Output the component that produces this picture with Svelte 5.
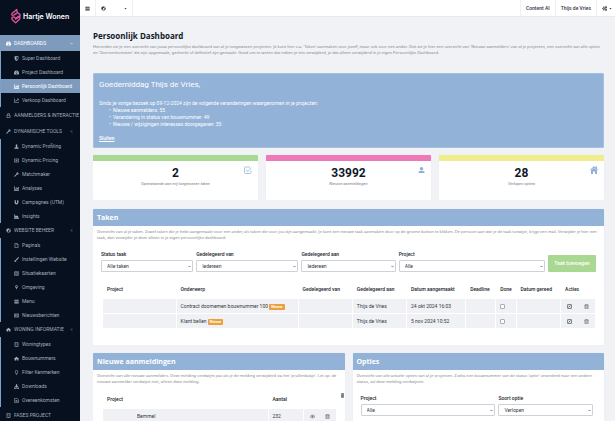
<script lang="ts">
  type Item = { icon: string; label: string; active?: boolean };
  type Section = { icon: string; label: string; open?: boolean; arrow?: string; items?: Item[] };

  const sections: Section[] = [
    {
      icon: 'gauge', label: 'Dashboards', open: true, arrow: 'down',
      items: [
        { icon: 'shield', label: 'Super Dashboard' },
        { icon: 'gauge', label: 'Project Dashboard' },
        { icon: 'bars', label: 'Persoonlijk Dashboard', active: true },
        { icon: 'line', label: 'Verkoop Dashboard' }
      ]
    },
    { icon: 'lock', label: 'Aanmelders & Interactie' },
    {
      icon: 'wrench', label: 'Dynamische tools', arrow: 'left',
      items: [
        { icon: 'person', label: 'Dynamic Profiling' },
        { icon: 'money', label: 'Dynamic Pricing' },
        { icon: 'wrench', label: 'Matchmaker' },
        { icon: 'bars', label: 'Analyses' },
        { icon: 'magnet', label: 'Campagnes (UTM)' },
        { icon: 'area', label: 'Insights' }
      ]
    },
    {
      icon: 'globe', label: 'Website beheer', arrow: 'left',
      items: [
        { icon: 'file', label: "Pagina's" },
        { icon: 'brush', label: 'Instellingen Website' },
        { icon: 'map', label: 'Situatiekaarten' },
        { icon: 'pin', label: 'Omgeving' },
        { icon: 'menu', label: 'Menu' },
        { icon: 'news', label: 'Nieuwsberichten' }
      ]
    },
    {
      icon: 'home', label: 'Woning informatie', arrow: 'left',
      items: [
        { icon: 'building', label: 'Woningtypes' },
        { icon: 'home', label: 'Bouwnummers' },
        { icon: 'bulb', label: 'Filter Kenmerken' },
        { icon: 'download', label: 'Downloads' },
        { icon: 'doc', label: 'Overeenkomsten' }
      ]
    },
    { icon: 'building', label: 'Fases project' }
  ];

  const stats = [
    { value: '2', label: 'Openstaande aan mij toegewezen taken', color: 'green', icon: 'check' },
    { value: '33992', label: 'Nieuwe aanmeldingen', color: 'pink', icon: 'user' },
    { value: '28', label: 'Verlopen opties', color: 'yellow', icon: 'house' }
  ];

  const filters = [
    { id: 'status', label: 'Status taak', value: 'Alle taken' },
    { id: 'van', label: 'Gedelegeerd van', value: 'Iedereen' },
    { id: 'aan', label: 'Gedelegeerd aan', value: 'Iedereen' },
    { id: 'project', label: 'Project', value: 'Alle' }
  ];

  const tasks = [
    { subject: 'Contract doornemen bouwnummer 100', to: 'Thijs de Vries', date: '24 okt 2024 16:03' },
    { subject: 'Klant bellen', to: 'Thijs de Vries', date: '5 nov 2024 10:52' }
  ];
</script>

{#snippet icon(name: string)}
  <svg class="icon" viewBox="0 0 16 16" aria-hidden="true">
    {#if name === 'gauge'}
      <path fill="currentColor" fill-rule="evenodd" d="M8 2a8 8 0 0 0-7 12h14A8 8 0 0 0 8 2zM7 4h2v2H7zM3 7h2v2H3zm8 0h2v2h-2zM7 12l2-5 1 5a1.500 1.500 0 0 1-3 0z" />
    {:else if name === 'shield'}
      <path fill="currentColor" fill-rule="evenodd" d="M2 1h12v7c0 4-3 6-6 8-3-2-6-4-6-8zM8 3v10c3-2 4-3 4-5V3z" />
    {:else if name === 'bars'}
      <path fill="currentColor" d="M0 1h2v12h14v2H0zM3 8h2v4H3zM6 4h2v8H6zM9 6h2v6H9zM12 3h3v9h-3z" />
    {:else if name === 'line'}
      <path fill="none" stroke="currentColor" stroke-width="2" d="M1 1v13h15M3 11l4-4 2 2 5-6M10 3h4v4" />
    {:else if name === 'area'}
      <path fill="currentColor" d="M0 1h2v12h14v2H0zM3 12V8l3-4 4 3 2-2 3 7z" />
    {:else if name === 'lock'}
      <path fill="none" stroke="currentColor" stroke-width="2" d="M3 7h10v8H3zM5 7V4a3 3 0 0 1 6 0v3" />
    {:else if name === 'wrench'}
      <path fill="currentColor" d="M1 13l7-7a4 4 0 0 1 5-5l-2 3 1 1 3-2a4 4 0 0 1-5 5l-7 7a1.500 1.500 0 0 1-2-2z" />
    {:else if name === 'person'}
      <path fill="currentColor" d="M8 1a3 3 0 0 1 2 5l1 5 4 1v3H1v-3l4-1 1-5a3 3 0 0 1 2-5z" />
    {:else if name === 'money'}
      <path fill="none" stroke="currentColor" stroke-width="2" d="M1 3h14v10H1zM4 6l2 2-2 2M12 6l-2 2 2 2M8 5v6" />
    {:else if name === 'magnet'}
      <path fill="none" stroke="currentColor" stroke-width="4" d="M4 1v7a4 4 0 0 0 8 0V1" />
    {:else if name === 'globe'}
      <circle fill="none" stroke="currentColor" stroke-width="2" cx="8" cy="8" r="6" />
      <path fill="currentColor" d="M2 5l4-3 4 1-1 3-3 2 1 3-1 2-4-4zM10 8l4-2v4l-3 3z" />
    {:else if name === 'file'}
      <path fill="none" stroke="currentColor" stroke-width="2" d="M3 1h6l4 4v10H3zM9 1v4h4" />
    {:else if name === 'doc'}
      <path fill="none" stroke="currentColor" stroke-width="2" d="M2 1h8l4 4v10H2zM5 8h6M5 11h6" />
    {:else if name === 'brush'}
      <path fill="currentColor" d="M15 0c2 1-1 5-6 10L6 8c3-4 7-7 9-8zM5 9l3 2c0 3-3 5-8 4 2-1 2-5 5-6z" />
    {:else if name === 'map'}
      <path fill="none" stroke="currentColor" stroke-width="2" d="M1 3l5-1 4 1 5-1v11l-5 1-4-1-5 1zM6 2v11M10 3v11" />
    {:else if name === 'pin'}
      <path fill="currentColor" fill-rule="evenodd" d="M8 1a4 4 0 0 1 4 4c0 3-3 5-4 10C7 10 4 8 4 5a4 4 0 0 1 4-4zM8 3a2 2 0 1 0 0 4 2 2 0 0 0 0-4z" />
    {:else if name === 'menu'}
      <path fill="currentColor" d="M1 2h14v2H1zM1 5h14v2H1zM1 9h14v2H1zM1 12h14v2H1z" />
    {:else if name === 'news'}
      <path fill="none" stroke="currentColor" stroke-width="2" d="M1 3h14v10H1zM3 6h4v4H3zM9 6h5M9 10h5" />
    {:else if name === 'home'}
      <path fill="currentColor" d="M8 2l8 7-1 1-1-1v5h-4v-4H7v4H2V9l-1 1-1-1z" />
    {:else if name === 'house'}
      <path fill="currentColor" d="M8 0l3 3V1h3v5l2 2-1 1-7-6-7 6-1-1zM8 4l6 5v7h-4v-5H6v5H2V9z" />
    {:else if name === 'building'}
      <path fill="none" stroke="currentColor" stroke-width="2" d="M3 1h10v14H3zM8 12v3" />
      <path fill="currentColor" d="M5 3h2v2H5zM9 3h2v2H9zM5 7h2v2H5zM9 7h2v2H9z" />
    {:else if name === 'bulb'}
      <path fill="none" stroke="currentColor" stroke-width="2" d="M6 12c0-3-2-4-2-7a4 4 0 0 1 8 0c0 3-2 4-2 7zM6 15h4" />
    {:else if name === 'download'}
      <path fill="currentColor" d="M6 1h4v5h4l-6 6-6-6h4zM0 11h4l4 3 4-3h4v4H0z" />
    {:else if name === 'check'}
      <path fill="none" stroke="currentColor" stroke-width="1.500" d="M14 9v4a2 2 0 0 1-2 2H3a2 2 0 0 1-2-2V4a2 2 0 0 1 2-2h9M4 8l4 3 7-8" />
    {:else if name === 'user'}
      <path fill="currentColor" d="M8 1a4 4 0 0 1 0 8 4 4 0 0 1 0-8zM1 15v-2c1-3 3-3 5-3h4c2 0 4 0 5 3v2z" />
    {:else if name === 'cogs'}
      <path fill="none" stroke="currentColor" stroke-width="3" d="M6 5a3 3 0 1 1 0 6 3 3 0 0 1 0-6z" />
      <path fill="currentColor" d="M5 1h2v3H5zM5 12h2v3H5zM0 7h3v2H0zM11 1h4v2l1 2-2 2h-3l-1-3zM11 9h4v2l1 2-2 2h-3l-1-3z" />
    {:else if name === 'edit'}
      <path fill="none" stroke="currentColor" stroke-width="3" d="M2 2h12v12H2z" />
      <path fill="none" stroke="currentColor" stroke-width="3" d="M5 11l6-6" />
    {:else if name === 'trash'}
      <path fill="none" stroke="currentColor" stroke-width="2" d="M1 4h14M5 4V1h6v3M3 4v11h10V4M6 6v7M10 6v7" />
    {:else if name === 'eye'}
      <path fill="none" stroke="currentColor" stroke-width="2" d="M0 8c4-6 12-6 16 0-4 6-12 6-16 0z" />
      <circle fill="currentColor" cx="8" cy="8" r="3" />
    {:else if name === 'caret'}
      <path fill="currentColor" d="M2 5h12l-6 7z" />
    {:else if name === 'down'}
      <path fill="none" stroke="currentColor" stroke-width="3" d="M2 5l6 6 6-6" />
    {:else if name === 'left'}
      <path fill="none" stroke="currentColor" stroke-width="3" d="M11 2L5 8l6 6" />
    {/if}
  </svg>
{/snippet}

{#snippet selectField(id: string, label: string, value: string)}
  <div class="field">
    <label for={id}>{label}</label>
    <div class="select">
      <select {id}>
        <option>{value}</option>
      </select>
      {@render icon('down')}
    </div>
  </div>
{/snippet}

<div class="app">
  <aside class="sidebar">
    <a class="logo" href="#home">
      <svg viewBox="0 0 30 45" aria-hidden="true">
        <g fill="none" stroke="#e0549d" stroke-width="4" stroke-linejoin="round" stroke-linecap="round">
          <path d="M4 21c-4-4 0-8 4-10l9-8 2 9 7 5c3 4 0 8-4 10l-8 5" />
          <path d="M14 43L4 34c-4-5 1-11 6-8l4 4 9-7c5 2 5 8 1 11z" />
          <path d="M8 20l9-6" />
        </g>
      </svg>
      <span>Hartje Wonen</span>
    </a>

    <nav>
      {#each sections as section}
        <div class="section" class:open={section.open} class:group={section.items}>
          <a class="section-title" href="#menu">
            {@render icon(section.icon)}
            <span>{section.label}</span>
            {#if section.arrow}
              <i class="arrow">{@render icon(section.arrow)}</i>
            {/if}
          </a>
          {#if section.items}
            <ul>
              {#each section.items as item}
                <li>
                  <a href="#menu" class:active={item.active}>
                    {@render icon(item.icon)}
                    <span>{item.label}</span>
                  </a>
                </li>
              {/each}
            </ul>
          {/if}
        </div>
      {/each}
    </nav>
  </aside>

  <div class="page">
    <header class="topbar">
      <button class="toggle" aria-label="Menu">{@render icon('menu')}</button>
      <button class="language" aria-label="Taal">
        {@render icon('globe')}
        <i class="caret">{@render icon('caret')}</i>
      </button>
      <a class="first" href="#ai">Content AI</a>
      <a href="#profiel">Thijs de Vries</a>
      <button class="settings" aria-label="Instellingen">
        {@render icon('cogs')}
        <i class="caret">{@render icon('caret')}</i>
      </button>
    </header>

    <main>
      <h1>Persoonlijk Dashboard</h1>
      <p class="intro">
        Hieronder zie je een overzicht van jouw persoonlijke dashboard van al je toegewezen projecten. Je kunt hier o.a. 'Taken' aanmaken voor jezelf, maar ook voor een ander. Ook zie je hier een overzicht van 'Nieuwe aanmelders' van al je projecten, een overzicht van alle opties en 'Overeenkomsten' die zijn opgemaakt, gecheckt of definitief zijn gemaakt. Goed om te weten dat indien je iets verwijderd, je dat alleen verwijderd in je eigen Persoonlijke Dashboard.
      </p>

      <section class="welcome">
        <h2>Goedemiddag Thijs de Vries,</h2>
        <p>Sinds je vorige bezoek op 09-12-2024 zijn de volgende veranderingen waargenomen in je projecten:</p>
        <ul>
          <li>Nieuwe aanmelders: 55</li>
          <li>Verandering in status van bouwnummer: 49</li>
          <li>Nieuwe / wijzigingen interesses doorgegeven: 35</li>
        </ul>
        <a href="#sluiten">Sluiten</a>
      </section>

      <div class="stats">
        {#each stats as stat}
          <div class="stat {stat.color}">
            <strong>{stat.value}</strong>
            <em>{stat.label}</em>
            <span class="stat-icon">{@render icon(stat.icon)}</span>
          </div>
        {/each}
      </div>

      <section class="panel tasks">
        <h2>Taken</h2>
        <p>
          Overzicht van al je taken. Zowel taken die je hebt aangemaakt voor een ander, als taken die voor jou zijn aangemaakt. Je kunt een nieuwe taak aanmaken door op de groene button te klikken. De persoon aan wie je de taak toewijst, krijgt een mail. Verwijder je hier een taak, dan verwijder je deze alleen in je eigen persoonlijke dashboard.
        </p>
        <form class="filters">
          {#each filters as filter}
            {@render selectField(filter.id, filter.label, filter.value)}
          {/each}
          <button type="button" class="add">Taak toevoegen</button>
        </form>
        <table>
          <colgroup>
            <col class="w-project" /><col class="w-subject" /><col class="w-from" /><col class="w-to" /><col class="w-date" />
            <col class="w-deadline" /><col class="w-done" /><col class="w-ready" /><col class="w-actions" />
          </colgroup>
          <thead>
            <tr>
              <th>Project</th>
              <th>Onderwerp</th>
              <th>Gedelegeerd van</th>
              <th>Gedelegeerd aan</th>
              <th>Datum aangemaakt</th>
              <th>Deadline</th>
              <th>Done</th>
              <th>Datum gereed</th>
              <th>Acties</th>
            </tr>
          </thead>
          <tbody>
            {#each tasks as task}
              <tr>
                <td></td>
                <td>{task.subject} <span class="badge">Nieuw</span></td>
                <td></td>
                <td>{task.to}</td>
                <td>{task.date}</td>
                <td></td>
                <td><input type="checkbox" aria-label="Done" /></td>
                <td></td>
                <td>
                  <div class="actions">
                    <button aria-label="Bewerken">{@render icon('edit')}</button>
                    <button aria-label="Verwijderen">{@render icon('trash')}</button>
                  </div>
                </td>
              </tr>
            {/each}
          </tbody>
        </table>
      </section>

      <div class="columns">
        <section class="panel">
          <h2>Nieuwe aanmeldingen</h2>
          <p>
            Overzicht van alle nieuwe aanmelders. Deze melding verdwijnt pas als je de melding verwijderd via het 'prullenbakje'. Let op: de nieuwe aanmelder verdwijnt niet, alleen deze melding.
          </p>
          <div class="scroller">
            <table>
              <colgroup><col /><col class="w-count" /><col class="w-actions" /></colgroup>
              <thead>
                <tr><th>Project</th><th>Aantal</th><th></th></tr>
              </thead>
              <tbody>
                <tr>
                  <td class="name">Bemmel</td>
                  <td>232</td>
                  <td>
                    <div class="actions">
                      <button aria-label="Bekijken">{@render icon('eye')}</button>
                      <button aria-label="Verwijderen">{@render icon('trash')}</button>
                    </div>
                  </td>
                </tr>
              </tbody>
            </table>
            <span class="thumb"></span>
          </div>
        </section>

        <section class="panel">
          <h2>Opties</h2>
          <p>
            Overzicht van alle actuele opties van al je projecten. Zodra een bouwnummer van de status 'optie' veranderd naar een andere status, zal deze melding verdwijnen.
          </p>
          <form class="filters options">
            {@render selectField('optie-project', 'Project', 'Alle')}
            {@render selectField('optie-soort', 'Soort optie', 'Verlopen')}
          </form>
        </section>
      </div>
    </main>
  </div>
</div>

<style>
  :global(body) {
    margin: 0;
    background: #f0f2f6;
  }

  .app {
    --blue: #93b2d7;
    --dark: #06101f;
    display: grid;
    grid-template-columns: 80px minmax(0, 1fr);
    height: 100vh;
    overflow: hidden;
    font-family: Roboto, "Liberation Sans", sans-serif;
    font-size: 5px;
    line-height: 7px;
    color: #33373d;
  }

  .app * {
    box-sizing: border-box;
  }

  a {
    color: inherit;
    text-decoration: none;
  }

  button,
  select {
    font: inherit;
    color: inherit;
    border: 0;
    padding: 0;
    background: none;
  }

  h1,
  h2,
  p,
  ul {
    margin: 0;
    padding: 0;
  }

  .icon {
    display: block;
    width: 5px;
    height: 5px;
    flex: none;
  }

  /* Sidebar */
  .sidebar {
    background: var(--dark);
    color: #a3adba;
    overflow: hidden;
  }

  .logo {
    display: flex;
    align-items: center;
    gap: 2px;
    height: 35px;
    padding: 0 0 3px 11px;
    color: #fff;
    font-family: Inter, sans-serif;
    font-size: 7px;
    font-weight: 600;
    white-space: nowrap;
  }

  .logo svg {
    width: 10px;
    height: 16px;
  }

  .group {
    border-left: 1px solid #79a3cb;
  }

  .section-title {
    display: flex;
    align-items: center;
    gap: 3px;
    height: 15px;
    padding: 0 7px 0 6px;
    text-transform: uppercase;
    white-space: nowrap;
    background: var(--dark);
  }

  .group .section-title {
    margin-left: -1px;
  }

  .section:not(.group) .section-title {
    height: 17px;
  }

  .open .section-title {
    height: 16px;
    background: #7e9bbd;
    color: #fff;
  }

  .arrow {
    margin-left: auto;
  }

  .arrow .icon,
  .caret .icon {
    width: 3px;
    height: 3px;
  }

  .sidebar ul {
    list-style: none;
  }

  .sidebar li a {
    display: flex;
    align-items: center;
    gap: 3px;
    height: 14px;
    padding-left: 13px;
    white-space: nowrap;
  }

  .sidebar li a.active {
    background: #7e9bbd;
    color: #fff;
  }

  /* Top bar */
  .page {
    display: flex;
    flex-direction: column;
    min-width: 0;
    min-height: 0;
  }

  .topbar {
    display: flex;
    flex: none;
    height: 16px;
    background: #fff;
    font-weight: 500;
    box-shadow: 0 1px 0 #e8eaee;
  }

  .topbar > * {
    display: flex;
    align-items: center;
    padding: 0 5px;
    border-left: 1px solid #eef0f3;
  }

  .topbar .toggle {
    border-left: 0;
  }

  .topbar .language {
    justify-content: space-between;
    width: 38px;
    border-right: 1px solid #eef0f3;
  }

  .topbar .first {
    margin-left: auto;
  }

  .topbar .settings {
    gap: 2px;
    padding: 0 3px 0 5px;
  }

  /* Content */
  main {
    flex: 1;
    min-height: 0;
    padding: 15px 11px 0 13px;
    overflow-y: auto;
    scrollbar-width: none;
  }

  h1 {
    font-family: "Open Sans", "Noto Sans", sans-serif;
    font-size: 8px;
    line-height: 10px;
    color: #0f1829;
  }

  .intro,
  .panel p {
    font-family: "Noto Sans", sans-serif;
    font-size: 4px;
    line-height: 6px;
    color: #80858d;
  }

  .intro {
    margin-top: 3px;
  }

  .welcome {
    margin-top: 17px;
    padding: 6px 5px 5px;
    border: 1px solid #a6c0de;
    border-radius: 1px;
    background: var(--blue);
    color: #fff;
  }

  .welcome h2 {
    margin-bottom: 10px;
    font-size: 8px;
    line-height: 10px;
    font-weight: 400;
  }

  .welcome ul {
    margin-bottom: 7px;
    padding-left: 10px;
    list-style: none;
  }

  .welcome li {
    display: flex;
  }

  .welcome li::before {
    content: '•';
    width: 4px;
  }

  .welcome a {
    display: block;
    font-weight: 500;
    text-decoration: underline;
  }

  .stats {
    display: grid;
    grid-template-columns: repeat(3, 1fr);
    gap: 8px;
    margin-top: 7px;
  }

  .stat {
    position: relative;
    display: flex;
    flex-direction: column;
    align-items: center;
    height: 45px;
    padding-top: 5px;
    border-top: 6px solid;
    border-radius: 1px;
    background: #fff;
    box-shadow: 0 0 1px #dfe2e8;
  }

  .stat strong {
    font-size: 12px;
    line-height: 15px;
    color: #0f1829;
  }

  .stat em {
    font-size: 4px;
    line-height: 6px;
    color: #777c85;
  }

  .green {
    border-color: #a8d891;
  }

  .pink {
    border-color: #ed7ab7;
  }

  .yellow {
    border-color: #f0ed8d;
  }

  .stat-icon {
    position: absolute;
    top: 5px;
    right: 6px;
    color: #8fb1d8;
  }

  .stat-icon .icon {
    width: 8px;
    height: 8px;
  }

  .pink .stat-icon .icon {
    width: 7px;
  }

  .panel {
    border-radius: 1px;
    background: #fff;
    box-shadow: 0 0 1px #dfe2e8;
  }

  .panel h2 {
    height: 17px;
    padding-left: 4px;
    border-radius: 1px 1px 0 0;
    background: var(--blue);
    color: #fff;
    font-family: "Open Sans", "Noto Sans", sans-serif;
    font-size: 7px;
    line-height: 17px;
  }

  .panel p {
    padding: 3px 4px 0;
  }

  .tasks {
    margin-top: 9px;
    padding-bottom: 16px;
  }

  .filters {
    display: grid;
    grid-template-columns: 92fr 102fr 94fr 146fr 48px;
    gap: 3px;
    align-items: end;
    padding: 10px 8px 0;
  }

  .options {
    grid-template-columns: 134fr 94fr;
    padding: 10px 11px 0 8px;
  }

  label {
    display: block;
    margin-bottom: 2px;
    font-weight: 500;
    color: #22262c;
  }

  .select {
    position: relative;
  }

  .select select {
    display: block;
    width: 100%;
    height: 12px;
    padding: 0 5px;
    border: 1px solid #ced2d8;
    border-radius: 1px;
    background: #fff;
    appearance: none;
  }

  .select .icon {
    position: absolute;
    top: 5px;
    right: 2px;
    width: 3px;
    height: 3px;
    pointer-events: none;
  }

  .add {
    height: 17px;
    border-radius: 1px;
    background: #a8d891;
    color: #fff;
    font-weight: 500;
  }

  table {
    width: calc(100% - 17px);
    margin: 8px 8px 0 9px;
    border-spacing: 1px;
    table-layout: fixed;
  }

  th,
  td {
    height: 14px;
    padding: 0 4px;
    text-align: left;
    white-space: nowrap;
  }

  th {
    height: 17px;
    font-weight: 500;
    color: #22262c;
  }

  td {
    background: #f0f1f5;
  }

  .w-project { width: 15%; }
  .w-subject { width: 25%; }
  .w-from { width: 11%; }
  .w-to { width: 11%; }
  .w-date { width: 12%; }
  .w-deadline { width: 6%; }
  .w-done { width: 4%; }
  .w-ready { width: 9%; }
  .w-actions { width: 32px; }
  .w-count { width: 34px; }

  .badge {
    display: inline-block;
    padding: 0 2px;
    border-radius: 1px;
    background: #eba03c;
    color: #fff;
    font-size: 4px;
    line-height: 6px;
    font-weight: 700;
  }

  input[type='checkbox'] {
    display: block;
    width: 5px;
    height: 5px;
    margin: 0;
    border: 1px solid #a9adb3;
    border-radius: 1px;
    background: #fff;
    appearance: none;
  }

  .actions {
    display: flex;
    justify-content: space-between;
    padding: 0 2px;
    color: #6d7178;
  }

  .columns {
    display: grid;
    grid-template-columns: 1fr 1fr;
    gap: 8px;
    margin-top: 8px;
  }

  .scroller {
    position: relative;
    padding-bottom: 15px;
  }

  .scroller table {
    margin-top: 5px;
  }

  .name {
    padding-left: 34px;
  }

  .thumb {
    position: absolute;
    top: 3px;
    right: 1px;
    width: 3px;
    height: 5px;
    border-radius: 1px;
    background: #858585;
  }
</style>
